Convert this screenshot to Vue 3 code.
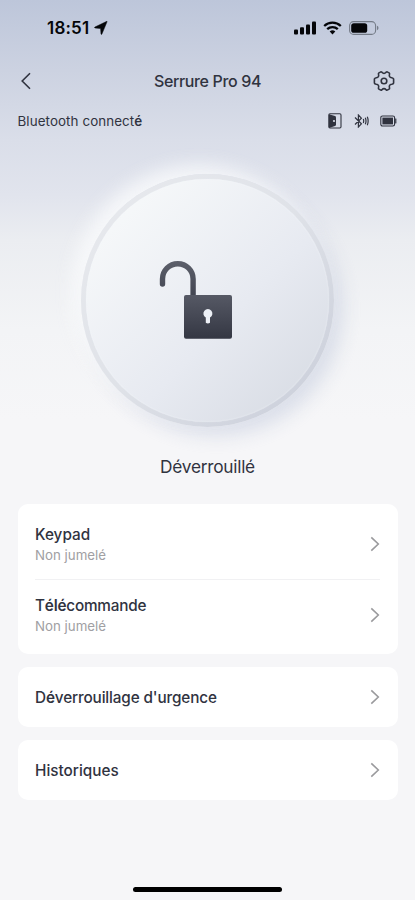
<script setup>
const groups = [
  [
    { title: [['Keypad']], cls: 'keypad', sub: 'Non jumelé' },
    { title: [['T'], ['élé', true], ['commande']], cls: 'remote', sub: 'Non jumelé' },
  ],
  [{ title: [['D'], ['é', true], ["verrouillage d'urgence"]], cls: 'urgent' }],
  [{ title: [['Historiques']], cls: 'history' }],
]
</script>

<template>
  <div class="screen">
    <header class="status">
      <div class="clock">
        <span>18:51</span>
        <svg width="14" height="14" viewBox="0 0 14 14"><path d="M13.1.6 7.9 13.1q-.5.9-.9-.1L6.6 7.5 1 7q-1-.4-.1-.9L12.4.5q.9-.4.7.1Z" fill="#050609" stroke="#050609" stroke-width=".5" /></svg>
      </div>
      <div class="signals">
        <svg width="22" height="14" viewBox="0 0 22 14" fill="#050609">
          <rect x="0" y="8.6" width="4" height="5" rx="1" /><rect x="6" y="6.2" width="4" height="7.4" rx="1" /><rect x="12" y="3.4" width="4" height="10.2" rx="1" /><rect x="18" y=".4" width="4" height="13.2" rx="1" />
        </svg>
        <svg width="19" height="14" viewBox="0 0 19 14">
          <path d="M1.2 5a12 12 0 0 1 16.6 0M4.2 8.2a7.7 7.7 0 0 1 10.6 0" fill="none" stroke="#050609" stroke-width="2.3" />
          <path d="M6.7 10.5a4.4 4.4 0 0 1 5.6 0L9.5 13.4Z" fill="#050609" />
        </svg>
        <svg width="30" height="14" viewBox="0 0 30 14">
          <rect x=".6" y=".6" width="26" height="12.8" rx="4" fill="none" stroke="#747b87" stroke-width="1.1" />
          <rect x="2.2" y="2.2" width="16" height="9.6" rx="2.6" fill="#050609" />
          <path d="M28 4.8q1.5.6 1.5 2.2T28 9.2Z" fill="#747b87" />
        </svg>
      </div>
    </header>

    <nav class="nav">
      <svg class="back" width="12" height="18" viewBox="0 0 12 18"><path d="M10 1.3 2.2 9l7.8 7.7" fill="none" stroke="#30333f" stroke-width="1.6" /></svg>
      <h1><span>Serrure Pro 94</span></h1>
      <svg class="gear" width="22" height="22" viewBox="0 0 22 22" fill="none" stroke="#30333f" stroke-width="1.6" stroke-linejoin="round">
        <path d="M7.3 2.1Q8.1 1.5 8.9 2.2 11 4.6 13.1 2.2 13.9 1.5 14.7 2.1L16.1 2.9Q16.8 3.3 16.5 4.3 15.6 7.3 18.7 7.7 20.4 8 20.6 9V13Q20.4 14 18.7 14.3 15.6 14.7 16.5 17.7 16.8 18.7 16.1 19.1L14.7 19.9Q13.9 20.5 13.1 19.8 11 17.4 8.9 19.8 8.1 20.5 7.3 19.9L5.9 19.1Q5.2 18.7 5.5 17.7 6.4 14.7 3.3 14.3 1.6 14 1.4 13V9Q1.6 8 3.3 7.7 6.4 7.3 5.5 4.3 5.2 3.3 5.9 2.9Z" />
        <circle cx="11" cy="11" r="2.8" />
      </svg>
    </nav>

    <div class="connection">
      <p>Bluetooth connect<b>é</b></p>
      <div class="device-icons">
        <svg width="14" height="16" viewBox="0 0 14 16">
          <rect x=".8" y=".8" width="12.2" height="14.2" rx="1.2" fill="none" stroke="#30333f" stroke-width="1.1" />
          <path d="M1 1.2 7 3.1Q8 3.5 8 4.5v7q0 1-1 1.5L1 15Z" fill="#30333f" />
          <circle cx="6" cy="8" r="1.1" fill="#d8dce7" />
        </svg>
        <svg width="15" height="14" viewBox="0 0 15 14" fill="none" stroke="#30333f" stroke-width="1.2">
          <path d="m1 3.5 6.4 6.3L4.4 13V1l3 3.2L1 10.5M9.3 5q.8 2 0 4M11.3 3.8q1.4 3.2 0 6.4M13.3 2.8q1.7 4.2 0 8.4" />
        </svg>
        <svg width="17" height="12" viewBox="0 0 17 12">
          <rect x=".8" y="1" width="13.8" height="10" rx="1.7" fill="none" stroke="#30333f" stroke-width="1.1" />
          <rect x="2.4" y="2.6" width="10.6" height="6.8" fill="#30333f" /><path d="M15.3 3.8h.9v4.4h-.9Z" fill="#30333f" stroke="#30333f" stroke-width=".3" />
        </svg>
      </div>
    </div>

    <main>
      <button class="dial" aria-label="Verrouiller">
        <span class="face">
          <svg width="74" height="80" viewBox="0 0 74 80">
            <defs>
              <linearGradient id="body" x2="0" y2="1"><stop stop-color="#565965" /><stop offset="1" stop-color="#343743" /></linearGradient>
              <linearGradient id="arch" gradientUnits="userSpaceOnUse" x1="0" y1="0" x2="0" y2="35"><stop stop-color="#5d606b" /><stop offset="1" stop-color="#444753" /></linearGradient>
            </defs>
            <path d="M3.5 24V19a15.3 15.3 0 0 1 30.6 0v16" fill="none" stroke="url(#arch)" stroke-width="5.4" stroke-linecap="round" />
            <rect x="25" y="35" width="48" height="43.7" rx="2" fill="url(#body)" />
            <path d="M46.8 57.5a4.5 4.5 0 1 1 4.2 0v5.3q-2.1 1.6-4.2 0Z" fill="#edf0f6" />
          </svg>
        </span>
      </button>
      <p class="state"><span>Déverrouillé</span></p>

      <div class="cards">
        <section v-for="(rows, g) in groups" :key="g" class="card">
          <div v-for="row in rows" :key="row.cls" class="row" :class="{ double: row.sub }">
            <div>
              <h2 :class="row.cls"><template v-for="part in row.title" :key="part[0]"><b v-if="part[1]">{{ part[0] }}</b><template v-else>{{ part[0] }}</template></template></h2>
              <p v-if="row.sub">{{ row.sub }}</p>
            </div>
            <svg width="10" height="16" viewBox="0 0 10 16"><path d="m1.3 1.3 7 6.7-7 6.7" fill="none" stroke="#9a9a9d" stroke-width="1.6" /></svg>
          </div>
        </section>
      </div>
    </main>
    <div class="home"></div>
  </div>
</template>

<style>
body { margin: 0; background: #f6f6f8; }
</style>
<style scoped>
* { box-sizing: border-box; }
h1, h2, p { margin: 0; font-weight: 400; }
.screen { width: 415px; height: 900px; overflow: hidden; display: flex; flex-direction: column; font-family: Inter, "Liberation Sans", sans-serif; color: #30333f; background: linear-gradient(#bdc6da 0, #ccd2e1 70px, #dadee9 140px, #e1e4ed 195px, #ebedf1 240px, #f3f4f6 330px, #f6f6f8 420px); }
.status { height: 56px; display: flex; justify-content: space-between; align-items: center; padding: 0 36px 0 47px; flex: none; }
.clock { display: flex; align-items: center; gap: 4px; font-size: 17px; font-weight: 600; line-height: 20px; color: #050609; }
.clock span { width: 43px; letter-spacing: .2px; }
.signals { display: flex; align-items: center; gap: 7px; }
.nav { height: 50px; flex: none; display: grid; grid-template-columns: 22px 1fr 22px; align-items: center; padding: 0 20px; }
.nav h1 { text-align: center; font-size: 16px; line-height: 20px; font-weight: 500; letter-spacing: -.36px; }
.connection { height: 30px; flex: none; display: flex; align-items: center; justify-content: space-between; padding: 0 18px 0 17.5px; font-size: 13.4px; letter-spacing: .08px; }
b { font-weight: 600; }
.device-icons { display: flex; align-items: center; gap: 11.5px; }
main { flex: 1; display: flex; flex-direction: column; align-items: center; padding: 37.5px 17.5px 0; }
.dial { width: 253px; height: 253px; flex: none; padding: 5px; border: 0; border-radius: 50%; background: linear-gradient(135deg, #e8eaee 5%, #dfe2e8 50%, #cdd1dc 88%); box-shadow: -9px -9px 18px rgba(249, 250, 251, .85), 9px 9px 18px rgba(205, 210, 226, .65); }
.face { width: 243px; height: 243px; border-radius: 50%; display: flex; justify-content: center; align-items: center; padding-right: 24px; background: linear-gradient(135deg, #f7f9fa 10%, #e7eaf1 58%, #d8dce4 92%); box-shadow: 0 0 1px rgba(249, 251, 255, .65), inset 0 0 2px rgba(249, 251, 255, .6); }
.state { margin-top: 27px; font-size: 17.3px; line-height: 26px; letter-spacing: -.25px; }
.cards { width: 380px; margin-top: 24.5px; display: flex; flex-direction: column; gap: 13px; }
.card { background: #fff; border-radius: 10px; padding: 0 17.5px; }
.row { height: 60px; display: flex; align-items: center; justify-content: space-between; }
.row.double { height: 75px; padding-top: 5px; }
.row.double + .row { border-top: 1px solid #f1f1f3; padding: 0 0 4px; }
h2 { font-size: 15.3px; line-height: 21px; font-weight: 500; color: #30333f; }
.remote { letter-spacing: -.2px; }
.urgent { letter-spacing: -.14px; }
.row p { font-size: 13.3px; line-height: 18px; margin-top: 1px; color: #a0a0a3; }
.home { width: 149px; height: 5px; border-radius: 3px; background: #000; flex: none; margin: 0 auto 8px; }
</style>
